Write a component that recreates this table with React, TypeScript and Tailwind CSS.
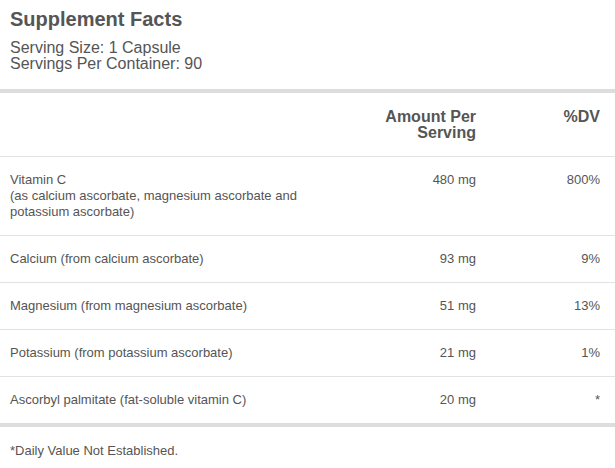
const rows = [
  { name: "Vitamin C", sub: "(as calcium ascorbate, magnesium ascorbate and potassium ascorbate)", amount: "480 mg", dv: "800%" },
  { name: "Calcium (from calcium ascorbate)", amount: "93 mg", dv: "9%" },
  { name: "Magnesium (from magnesium ascorbate)", amount: "51 mg", dv: "13%" },
  { name: "Potassium (from potassium ascorbate)", amount: "21 mg", dv: "1%" },
  { name: "Ascorbyl palmitate (fat-soluble vitamin C)", amount: "20 mg", dv: "*" },
];

export default function App() {
  return (
    <div className="w-[615px] h-[468px] bg-white text-[#555] font-['Liberation_Sans',Arial,sans-serif] overflow-hidden">
      {/* Header */}
      <div className="px-[10px] pt-[7px] h-[89px]">
        <h1 className="text-[20px] font-bold leading-[24px] text-[#555]">Supplement Facts</h1>
        <div className="mt-[9px] text-[16px] leading-[16px]">
          <p>Serving Size: 1 Capsule</p>
          <p>Servings Per Container: 90</p>
        </div>
      </div>

      <div className="h-[4px] bg-[#ddd]" />

      {/* Column headings */}
      <div className="flex pl-[10px] pr-[15px] pt-[16px] pb-[15px] border-b border-[#e2e2e2] text-[16px] font-bold leading-[16px]">
        <div className="flex-1" />
        <div className="w-[120px] text-right">
          Amount Per
          <br />
          Serving
        </div>
        <div className="w-[124px] text-right">%DV</div>
      </div>

      {/* Nutrient rows */}
      {rows.map((row, i) => (
        <div
          key={row.name}
          className={
            "flex pl-[10px] pr-[15px] py-[15px] text-[13px] leading-[16px] " +
            (i < rows.length - 1 ? "border-b border-[#e2e2e2]" : "")
          }
        >
          <div className="flex-1 pr-[20px]">
            <div>{row.name}</div>
            {row.sub && <div className="w-[300px]">{row.sub}</div>}
          </div>
          <div className="w-[120px] text-right">{row.amount}</div>
          <div className="w-[124px] text-right">{row.dv}</div>
        </div>
      ))}

      <div className="h-[4px] bg-[#ddd]" />

      <p className="px-[10px] pt-[16px] text-[13px] leading-[16px]">*Daily Value Not Established.</p>
    </div>
  );
}
